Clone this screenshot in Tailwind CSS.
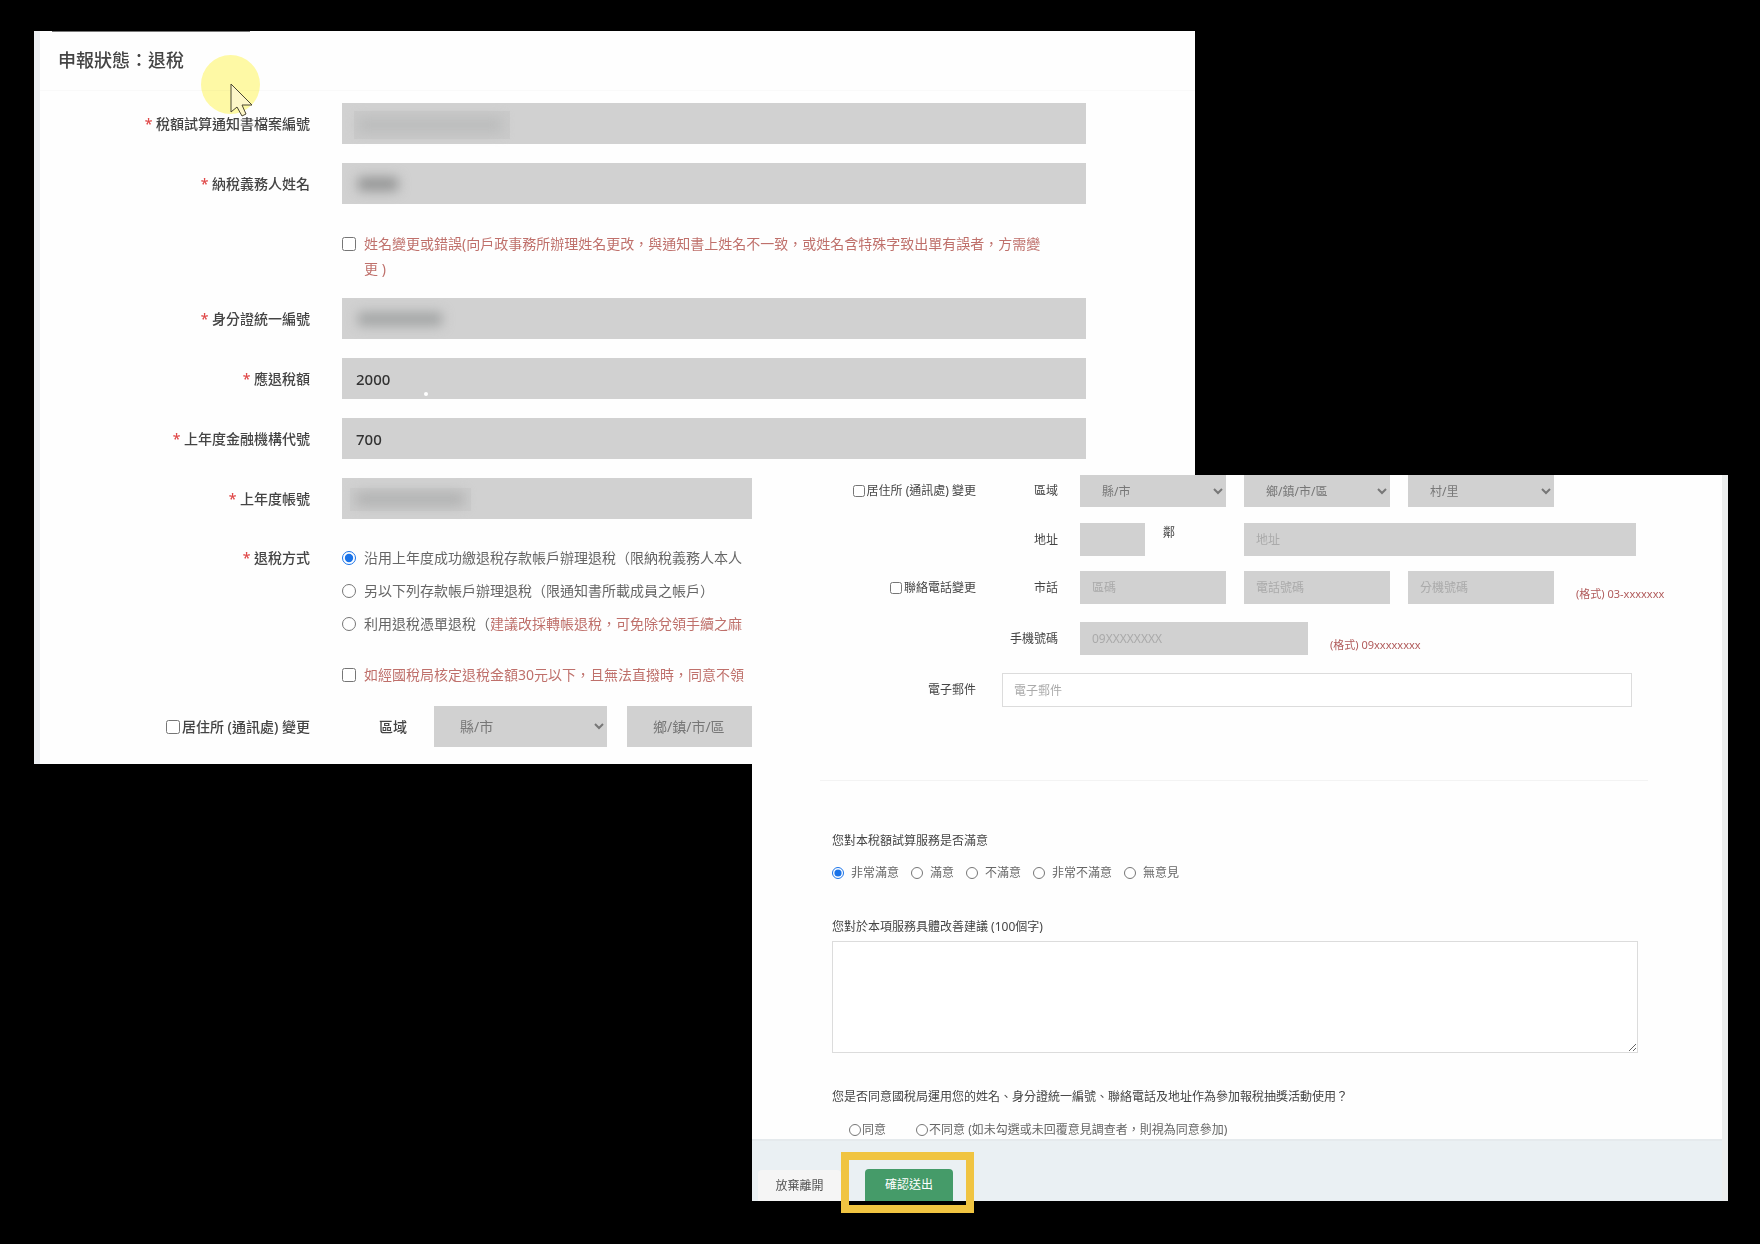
<!DOCTYPE html>
<html lang="zh-Hant">
<head>
    <meta charset="UTF-8">
    <meta name="viewport" content="width=device-width, initial-scale=1.0">
    <title>申報狀態：退稅</title>
    <script src="https://cdn.jsdelivr.net/npm/@tailwindcss/browser@4"></script>
</head>
<body class="bg-black min-h-screen pt-[31px] pb-10 font-['Noto_Sans','Noto_Sans_CJK_TC',sans-serif] text-[#444]">

    <!-- Refund form -->
    <form class="relative ml-[34px] mr-[565px] bg-[#fefefe] border-l-[6px] border-[#eceff2] text-sm pb-[17px]">
        <div class="absolute top-0 left-3 w-[198px] h-px bg-[#777]"></div>
        <header class="h-[60px] pt-4 pl-[18px] border-b border-[#f9f9f9]">
            <h1 class="text-lg leading-[26px] font-medium text-[#444]">申報狀態：退稅</h1>
        </header>

        <div class="pt-3 pr-[109px]">
            <div class="flex items-center gap-8">
                <label for="fileNo" class="w-[270px] text-right font-medium"><span class="text-[#e04848]">*</span> 稅額試算通知書檔案編號</label>
                <div class="relative flex-1">
                    <input id="fileNo" type="text" readonly class="block w-full h-[41px] px-3.5 bg-[#d1d1d1]">
                    <span class="absolute left-3 top-2 w-[156px] h-7 bg-[#cacaca]"></span>
                    <span class="absolute left-4 top-3.5 w-[144px] h-4 bg-[#bcbdbd] blur-[6px]"></span>
                </div>
            </div>

            <div class="flex items-center gap-8 mt-[19px]">
                <label for="taxpayer" class="w-[270px] text-right font-medium"><span class="text-[#e04848]">*</span> 納稅義務人姓名</label>
                <div class="relative flex-1">
                    <input id="taxpayer" type="text" readonly class="block w-full h-[41px] px-3.5 bg-[#d1d1d1]">
                    <span class="absolute left-4 top-3.5 w-10 h-3.5 bg-[#949595] blur-[6px]"></span>
                </div>
            </div>

            <div class="flex gap-2 mt-[27px] pl-[302px] leading-[25px] text-[#bf706b]">
                <input id="nameChange" type="checkbox" class="size-3.5 mt-1.5 shrink-0">
                <label for="nameChange" class="whitespace-nowrap">姓名變更或錯誤(向戶政事務所辦理姓名更改，與通知書上姓名不一致，或姓名含特殊字致出單有誤者，方需變<br>更 )</label>
            </div>

            <div class="flex items-center gap-8 mt-[17px]">
                <label for="idNo" class="w-[270px] text-right font-medium"><span class="text-[#e04848]">*</span> 身分證統一編號</label>
                <div class="relative flex-1">
                    <input id="idNo" type="text" readonly class="block w-full h-[41px] px-3.5 bg-[#d1d1d1]">
                    <span class="absolute left-4 top-3.5 w-[84px] h-3.5 bg-[#a3a5a5] blur-[6px]"></span>
                </div>
            </div>

            <div class="flex items-center gap-8 mt-[19px]">
                <label for="refund" class="w-[270px] text-right font-medium"><span class="text-[#e04848]">*</span> 應退稅額</label>
                <div class="relative flex-1">
                    <input id="refund" type="text" readonly value="2000" class="block w-full h-[41px] px-3.5 bg-[#d1d1d1] text-[15px] font-medium text-[#333]">
                    <span class="absolute left-[82px] top-[34px] size-1 rounded-full bg-white"></span>
                </div>
            </div>

            <div class="flex items-center gap-8 mt-[19px]">
                <label for="bankCode" class="w-[270px] text-right font-medium"><span class="text-[#e04848]">*</span> 上年度金融機構代號</label>
                <input id="bankCode" type="text" readonly value="700" class="flex-1 h-[41px] px-3.5 bg-[#d1d1d1] text-[15px] font-medium text-[#333]">
            </div>

            <div class="flex items-center gap-8 mt-[19px]">
                <label for="account" class="w-[270px] text-right font-medium"><span class="text-[#e04848]">*</span> 上年度帳號</label>
                <div class="relative flex-1">
                    <input id="account" type="text" readonly class="block w-full h-[41px] px-3.5 bg-[#d1d1d1]">
                    <span class="absolute left-2 top-2.5 w-[121px] h-[23px] bg-[#cbcbcb]"></span>
                    <span class="absolute left-3.5 top-3.5 w-[108px] h-3.5 bg-[#b2b3b3] blur-[6px]"></span>
                </div>
            </div>

            <div role="radiogroup" aria-labelledby="methodLabel" class="flex gap-8 mt-[22px] leading-[33px]">
                <span id="methodLabel" class="w-[270px] text-right font-medium"><span class="text-[#e04848]">*</span> 退稅方式</span>
                <div class="flex-1 whitespace-nowrap text-[#666]">
                    <label class="flex items-center gap-2"><input type="radio" name="method" checked class="size-3.5 accent-[#1a73e8]"> 沿用上年度成功繳退稅存款帳戶辦理退稅（限納稅義務人本人</label>
                    <label class="flex items-center gap-2"><input type="radio" name="method" class="size-3.5"> 另以下列存款帳戶辦理退稅（限通知書所載成員之帳戶）</label>
                    <label class="flex items-center gap-2"><input type="radio" name="method" class="size-3.5"> <span>利用退稅憑單退稅（<span class="text-[#bf706b]">建議改採轉帳退稅，可免除兌領手續之麻</span></span></label>
                </div>
            </div>

            <label class="flex items-center gap-2 mt-[18px] pl-[302px] leading-[33px] whitespace-nowrap text-[#bf706b]">
                <input type="checkbox" class="size-3.5"> 如經國稅局核定退稅金額30元以下，且無法直撥時，同意不領
            </label>

            <div class="flex items-center mt-[15px]">
                <label class="w-[270px] flex items-center justify-end font-medium"><input type="checkbox" class="size-3.5 mr-0.5">居住所 (通訊處) 變更</label>
                <label for="city1" class="w-[97px] text-right font-medium">區域</label>
                <select id="city1" class="w-[173px] h-[41px] ml-[27px] pl-[22px] bg-[#d1d1d1] text-[#777]"><option>縣/市</option></select>
                <select aria-label="鄉/鎮/市/區" class="w-[173px] h-[41px] ml-5 pl-[22px] bg-[#d1d1d1] text-[#777]"><option>鄉/鎮/市/區</option></select>
            </div>
        </div>

        <!-- Mouse pointer with highlight -->
        <div class="absolute left-[161px] top-6 size-[59px] rounded-full bg-[#fffaa6] mix-blend-multiply"></div>
        <svg class="absolute left-[190px] top-[52px]" width="24" height="36" viewBox="0 0 24 36" fill="#fdf6c8" stroke="#4a4632" stroke-width="1">
            <path d="M1 1V29L7 24L12 33L16 31L12 22H22Z"/>
        </svg>
    </form>

    <!-- Contact details and survey -->
    <form class="relative -mt-[289px] ml-[752px] mr-8 bg-[#fefefe] border-r-[6px] border-[#eceeee] text-xs">
        <div class="flex items-center">
            <label class="w-56 flex items-center justify-end"><input type="checkbox" class="size-3 mr-0.5">居住所 (通訊處) 變更</label>
            <label for="city2" class="w-[82px] text-right">區域</label>
            <div class="flex gap-[18px] ml-[22px]">
                <select id="city2" class="w-[146px] h-8 pl-[18px] bg-[#d1d1d1] text-[#777]"><option>縣/市</option></select>
                <select aria-label="鄉/鎮/市/區" class="w-[146px] h-8 pl-[18px] bg-[#d1d1d1] text-[#777]"><option>鄉/鎮/市/區</option></select>
                <select aria-label="村/里" class="w-[146px] h-8 pl-[18px] bg-[#d1d1d1] text-[#777]"><option>村/里</option></select>
            </div>
        </div>

        <div class="flex items-center mt-4">
            <label for="address" class="w-[306px] text-right">地址</label>
            <div class="flex flex-1 gap-[18px] ml-[22px] mr-[86px]">
                <input id="lin" type="text" class="w-[65px] h-[33px] px-3 bg-[#d1d1d1]">
                <label for="lin" class="w-[63px] leading-5">鄰</label>
                <input id="address" type="text" placeholder="地址" class="flex-1 h-[33px] px-3 bg-[#d1d1d1] placeholder:text-[#aaa]">
            </div>
        </div>

        <div class="flex items-center mt-[15px]">
            <label class="w-56 flex items-center justify-end"><input type="checkbox" class="size-3 mr-0.5">聯絡電話變更</label>
            <label for="areaCode" class="w-[82px] text-right">市話</label>
            <div class="flex items-end gap-[18px] ml-[22px]">
                <input id="areaCode" type="text" placeholder="區碼" class="w-[146px] h-[33px] px-3 bg-[#d1d1d1] placeholder:text-[#aaa]">
                <input type="text" aria-label="電話號碼" placeholder="電話號碼" class="w-[146px] h-[33px] px-3 bg-[#d1d1d1] placeholder:text-[#aaa]">
                <input type="text" aria-label="分機號碼" placeholder="分機號碼" class="w-[146px] h-[33px] px-3 bg-[#d1d1d1] placeholder:text-[#aaa]">
                <span class="ml-1 text-[11px] leading-5 whitespace-nowrap text-[#b05a5a]">(格式) 03-xxxxxxx</span>
            </div>
        </div>

        <div class="flex items-center mt-[18px]">
            <label for="mobile" class="w-[306px] text-right">手機號碼</label>
            <div class="flex items-end gap-[18px] ml-[22px]">
                <input id="mobile" type="text" placeholder="09XXXXXXXX" class="w-[228px] h-[33px] px-3 bg-[#d1d1d1] placeholder:text-[#aaa]">
                <span class="ml-1 text-[11px] leading-5 whitespace-nowrap text-[#b05a5a]">(格式) 09xxxxxxxx</span>
            </div>
        </div>

        <div class="flex items-center mt-[18px]">
            <label for="email" class="w-56 text-right">電子郵件</label>
            <input id="email" type="email" placeholder="電子郵件" class="flex-1 h-[34px] ml-[26px] mr-[90px] px-[11px] bg-white border border-[#dcdcdc] placeholder:text-[#aaa]">
        </div>

        <hr class="mt-[73px] ml-[68px] mr-[74px] border-[#f3f3f3]">

        <div class="mt-[50px] pl-20 pr-[84px]">
            <p class="leading-5">您對本稅額試算服務是否滿意</p>
            <div class="flex gap-3 mt-3 leading-5 text-[#666]">
                <label class="flex items-center gap-[7px]"><input type="radio" name="satisfied" checked class="size-3 accent-[#1a73e8]">非常滿意</label>
                <label class="flex items-center gap-[7px]"><input type="radio" name="satisfied" class="size-3">滿意</label>
                <label class="flex items-center gap-[7px]"><input type="radio" name="satisfied" class="size-3">不滿意</label>
                <label class="flex items-center gap-[7px]"><input type="radio" name="satisfied" class="size-3">非常不滿意</label>
                <label class="flex items-center gap-[7px]"><input type="radio" name="satisfied" class="size-3">無意見</label>
            </div>

            <label for="suggestion" class="block mt-[34px] leading-5">您對於本項服務具體改善建議 (100個字)</label>
            <textarea id="suggestion" class="block w-full h-[112px] mt-1 bg-white border border-[#dcdcdc]"></textarea>

            <p class="mt-[34px] leading-5">您是否同意國稅局運用您的姓名、身分證統一編號、聯絡電話及地址作為參加報稅抽獎活動使用？</p>
            <div class="flex gap-[30px] mt-3.5 pl-[17px] leading-[18px] text-[#666]">
                <label class="flex items-center gap-px"><input type="radio" name="agree" class="size-3">同意</label>
                <label class="flex items-center gap-px"><input type="radio" name="agree" class="size-3">不同意 (如未勾選或未回覆意見調查者，則視為同意參加)</label>
            </div>
        </div>

        <footer class="flex items-end h-[62px] pl-1.5 bg-[#eaf0f3] border-t-2 border-[#e5eaed]">
            <button type="button" class="w-[83px] h-[31px] bg-[#f5f5f5] rounded-t-sm text-[#555]">放棄離開</button>
            <div class="relative ml-6">
                <button type="submit" class="block w-[88px] h-8 bg-[#459b69] rounded-t-sm text-white">確認送出</button>
                <span class="absolute -left-6 -right-[21px] -top-[17px] -bottom-3 border-8 border-[#f0c441] pointer-events-none"></span>
            </div>
        </footer>
    </form>

</body>
</html>
